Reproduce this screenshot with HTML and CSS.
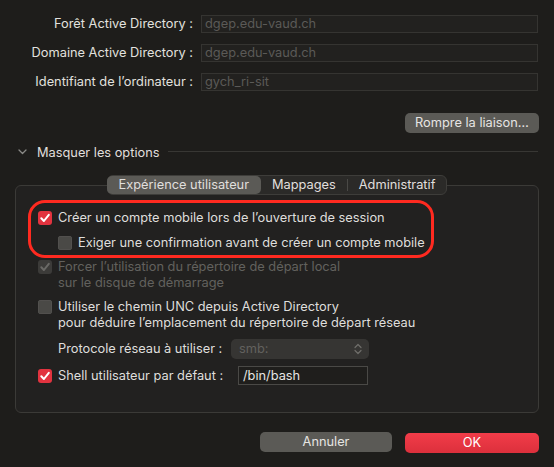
FILE: index.html
```html
<!DOCTYPE html>
<html lang="fr">
<head>
<meta charset="utf-8">
<title>Active Directory</title>
<link rel="stylesheet" href="styles.css">
</head>
<body>
<div class="fields">
  <label class="flabel">Forêt Active Directory :</label>
  <div class="field">dgep.edu-vaud.ch</div>
  <label class="flabel">Domaine Active Directory :</label>
  <div class="field">dgep.edu-vaud.ch</div>
  <label class="flabel">Identifiant de l’ordinateur :</label>
  <div class="field">gych_ri-sit</div>
</div>

<div class="actions">
  <button class="btn btn-unbind">Rompre la liaison…</button>
</div>

<div class="disclosure">
  <svg class="chev" width="9" height="6" viewBox="0 0 9 6"><path d="M1 1 L4.5 4.5 L8 1" fill="none" stroke="#8a8986" stroke-width="1.3" stroke-linecap="round" stroke-linejoin="round"/></svg>
  <span class="disc-text">Masquer les options</span>
  <span class="disc-line"></span>
</div>

<div class="group">
  <div class="tabs">
    <span class="tab active">Expérience utilisateur</span>
    <span class="tab">Mappages</span>
    <span class="tab-sep"></span>
    <span class="tab">Administratif</span>
  </div>

  <div class="row r1">
    <span class="cb checked"><svg width="14" height="14" viewBox="0 0 14 14"><path d="M3.3 7.3 L5.9 10 L10.8 3.8" fill="none" stroke="#fff" stroke-width="2" stroke-linecap="round" stroke-linejoin="round"/></svg></span>
    <span class="txt">Créer un compte mobile lors de l’ouverture de session</span>
  </div>
  <div class="row r2 indent">
    <span class="cb"></span>
    <span class="txt">Exiger une confirmation avant de créer un compte mobile</span>
  </div>
  <div class="row r3">
    <span class="cb disabled"><svg width="14" height="14" viewBox="0 0 14 14"><path d="M3.3 7.3 L5.9 10 L10.8 3.8" fill="none" stroke="#6b6a67" stroke-width="2" stroke-linecap="round" stroke-linejoin="round"/></svg></span>
    <span class="txt dim">Forcer l’utilisation du répertoire de départ local<br>sur le disque de démarrage</span>
  </div>
  <div class="row r4">
    <span class="cb"></span>
    <span class="txt">Utiliser le chemin UNC depuis Active Directory<br>pour déduire l’emplacement du répertoire de départ réseau</span>
  </div>
  <div class="row r5 indent-text">
    <span class="proto-label">Protocole réseau à utiliser :</span>
    <span class="select">
      <span class="sel-val">smb:</span>
      <svg class="sel-arrows" width="8" height="12" viewBox="0 0 8 12"><path d="M1 4.5 L4 1.5 L7 4.5 M1 7.5 L4 10.5 L7 7.5" fill="none" stroke="#6f6e6a" stroke-width="1.2" stroke-linecap="round" stroke-linejoin="round"/></svg>
    </span>
  </div>
  <div class="row r6">
    <span class="cb checked"><svg width="14" height="14" viewBox="0 0 14 14"><path d="M3.3 7.3 L5.9 10 L10.8 3.8" fill="none" stroke="#fff" stroke-width="2" stroke-linecap="round" stroke-linejoin="round"/></svg></span>
    <span class="shell-label">Shell utilisateur par défaut :</span>
    <span class="shell-input">/bin/bash</span>
  </div>

  <div class="highlight"></div>
</div>

<div class="footer">
  <button class="btn btn-cancel">Annuler</button>
  <button class="btn btn-ok">OK</button>
</div>
</body>
</html>
```

FILE: styles.css
```css
* { box-sizing: border-box; }

html, body {
  margin: 0;
  padding: 0;
  background: #1e1d1b;
}

body {
  font-family: Inter, "Noto Sans", "Liberation Sans", sans-serif;
  font-size: 12.8px;
  color: #dfdedc;
  padding-top: 15px;
  width: 554px;
  height: 467px;
  overflow: hidden;
}

.fields {
  display: grid;
  grid-template-columns: 193px 337px;
  column-gap: 8px;
  row-gap: 11px;
}

.flabel {
  text-align: right;
  line-height: 18px;
  height: 18px;
  color: #e2e1df;
  white-space: nowrap;
}

.field {
  height: 18px;
  line-height: 16px;
  border: 1px solid #353431;
  background: #22211f;
  color: #5b5a57;
  padding-left: 3px;
}

.actions {
  display: flex;
  justify-content: flex-end;
  padding-right: 15px;
  margin-top: 22px;
}

.btn {
  font-family: inherit;
  font-size: 12.8px;
  border: none;
  border-radius: 5px;
  color: #e6e5e3;
  height: 20px;
  padding: 0;
  line-height: 20px;
  cursor: default;
}

.btn-unbind {
  width: 134px;
  background: #5b5a56;
}

.disclosure {
  display: flex;
  align-items: center;
  height: 18px;
  margin-top: 10px;
  padding-left: 18px;
  padding-right: 16px;
}

.chev { flex: none; }

.disc-text {
  margin-left: 10px;
  color: #e0dfdd;
}

.disc-line {
  flex: 1;
  height: 1px;
  background: #383734;
  margin-left: 9px;
  margin-top: -2px;
}

.group {
  position: relative;
  margin: 24px 15px 0;
  border: 1px solid #3b3a37;
  border-radius: 6px;
  background: #222120;
  padding: 0 0 27px 22px;
}

.tabs {
  display: flex;
  align-items: center;
  width: max-content;
  margin: -11px auto 0;
  height: 20px;
  background: #2b2a28;
  border: 1px solid #3e3d3a;
  border-radius: 6px;
  position: relative;
  left: -11px;
}

.tab {
  height: 18px;
  line-height: 18px;
  padding: 0 11px;
  color: #e0dfdd;
}

.tab.active {
  background: #5b5a56;
  border-radius: 5px;
  padding: 0 12px;
  margin-left: -1px;
}

.tab-sep {
  width: 1px;
  height: 12px;
  background: #4a4946;
}

.row {
  display: flex;
  align-items: flex-start;
  line-height: 16px;
  white-space: nowrap;
}

.r1 { margin-top: 15px; }
.r2 { margin-top: 9px; }
.r3 { margin-top: 8px; }
.r4 { margin-top: 8px; }
.r5 { margin-top: 8px; align-items: center; }
.r6 { margin-top: 7px; align-items: center; }

.indent { padding-left: 20px; }
.indent-text { padding-left: 20px; }

.cb {
  flex: none;
  width: 14px;
  height: 14px;
  margin-top: 1px;
  margin-right: 6px;
  border-radius: 3px;
  background: #4a4946;
  box-shadow: inset 0 0 0 0.5px #5a5956;
  display: flex;
}

.cb.checked {
  background: #e2333f;
  box-shadow: none;
}

.cb.disabled {
  background: #3c3b39;
  box-shadow: none;
}

.r6 .cb { margin-top: 0; }

.txt.dim { color: #62615e; }

.proto-label {
  width: 173px;
  flex: none;
}

.select {
  display: flex;
  align-items: center;
  justify-content: space-between;
  width: 138px;
  height: 20px;
  border-radius: 5px;
  background: #363533;
  padding: 0 7px 0 8px;
}

.sel-val { color: #62615e; }

.shell-label {
  width: 180px;
  flex: none;
}

.shell-input {
  width: 130px;
  height: 19px;
  line-height: 17px;
  border: 1px solid #4a4946;
  background: #1f1e1c;
  padding-left: 4px;
  color: #e6e5e3;
}

.highlight {
  position: absolute;
  left: 12px;
  top: 14px;
  width: 406px;
  height: 58px;
  border: 3px solid #ff2a20;
  border-radius: 17px;
  pointer-events: none;
}

.footer {
  display: flex;
  justify-content: flex-end;
  gap: 13px;
  padding-right: 15px;
  margin-top: 19px;
}

.btn-cancel {
  width: 132px;
  background: #5b5a56;
}

.btn-ok {
  width: 134px;
  margin-top: 1px;
  background: linear-gradient(#f23c49, #dc303c);
  color: #fff;
}
```
